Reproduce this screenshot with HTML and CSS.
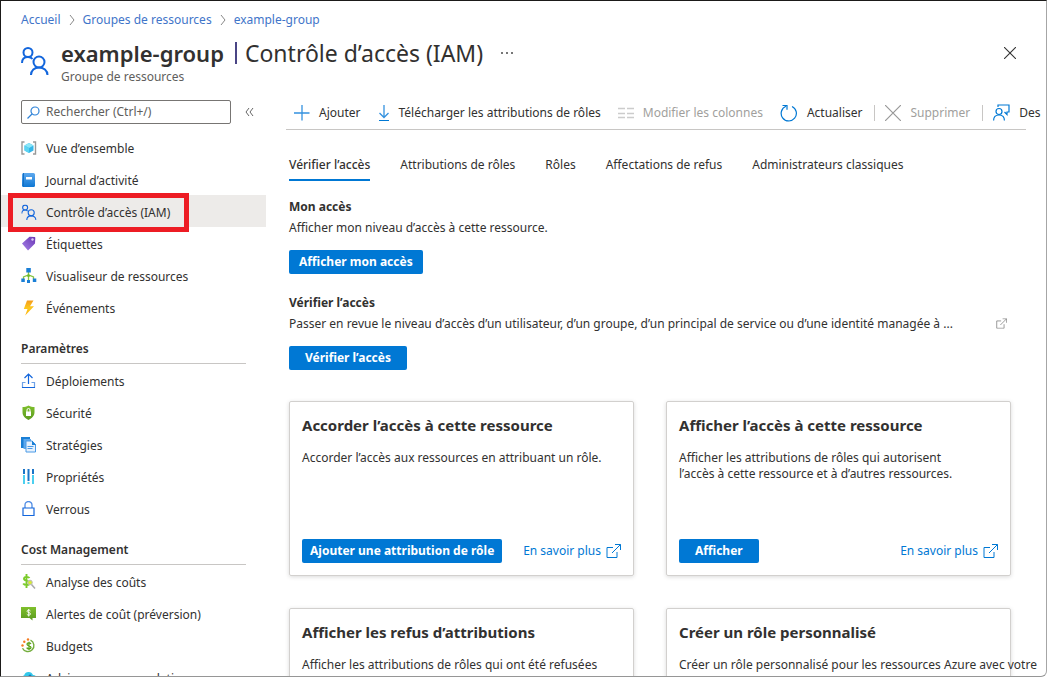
FILE: index.html
```
<!DOCTYPE html>
<html lang="fr">
<head>
<meta charset="utf-8">
<title>example-group | Contrôle d’accès (IAM)</title>
<link rel="stylesheet" href="styles.css">
</head>
<body>
<svg class="defs" aria-hidden="true">
  <defs>
    <linearGradient id="blue" x1="0" y1="0" x2="0" y2="1"><stop offset="0" stop-color="#5ea9ee"/><stop offset="1" stop-color="#0f78d4"/></linearGradient>
    <linearGradient id="purple" x1="1" y1="0" x2="0" y2="1"><stop offset="0" stop-color="#6a35b4"/><stop offset="1" stop-color="#a583e8"/></linearGradient>
    <linearGradient id="green" x1="0" y1="0" x2="0" y2="1"><stop offset="0" stop-color="#7fc02c"/><stop offset="1" stop-color="#5b9a20"/></linearGradient>
    <linearGradient id="bolt" x1="0" y1="0" x2="0" y2="1"><stop offset="0" stop-color="#f59b1c"/><stop offset=".5" stop-color="#fcc81c"/><stop offset="1" stop-color="#fdb515"/></linearGradient>
    <symbol id="people" viewBox="0 0 28 28">
      <g fill="none" stroke="#1366dc" stroke-width="2">
        <circle cx="7" cy="5.500" r="4.500"/><path d="M1 16c0-4 2.500-6 6-6 2 0 3.500.7 4.500 2"/>
        <circle cx="18" cy="15" r="5.500"/><path d="M10 28c0-4.500 3.500-7.500 8-7.500s8.500 3 8.500 7.500"/>
      </g>
    </symbol>
    <symbol id="external" viewBox="0 0 15 14">
      <path d="M7 3.500H1v10h10V8M9 .5h5.500V6M14.500.5 6 9" fill="none" stroke="currentColor"/>
    </symbol>
  </defs>
</svg>
<div class="portal">
  <header class="header">
    <nav class="breadcrumb" aria-label="Fil d’Ariane">
      <a href="#">Accueil</a>
      <svg width="6" height="10" viewBox="0 0 6 10"><path d="M1 0l4 5-4 5" fill="none" stroke="#888"/></svg>
      <a href="#">Groupes de ressources</a>
      <svg width="6" height="10" viewBox="0 0 6 10"><path d="M1 0l4 5-4 5" fill="none" stroke="#888"/></svg>
      <a href="#">example-group</a>
    </nav>
    <div class="heading">
      <svg class="heading-icon" width="28" height="28"><use href="#people"/></svg>
      <div class="heading-text">
        <div class="title-row">
          <h1><strong>example-group</strong><i class="bar"></i><span>Contrôle d’accès (IAM)</span></h1>
          <button class="plain" aria-label="Plus"><svg width="12" height="2" viewBox="0 0 12 2" fill="#777"><path d="M0 0h2v2H0zM5 0h2v2H5zM10 0h2v2h-2z"/></svg></button>
        </div>
        <p>Groupe de ressources</p>
      </div>
      <button class="plain close" aria-label="Fermer"><svg width="12" height="12" viewBox="0 0 12 12"><path d="M0 0l12 12M12 0L0 12" stroke="#333" stroke-width="1.100"/></svg></button>
    </div>
  </header>
  <div class="columns">
    <aside class="sidebar">
      <div class="search-row">
        <label class="search">
          <svg width="13" height="13" viewBox="0 0 13 13"><path d="M.5 12.500 5 8" stroke="#2f83d8" stroke-width="1.300"/><circle cx="8" cy="5" r="4" fill="none" stroke="#2f83d8" stroke-width="1.200"/></svg>
          <input type="text" aria-label="Rechercher" placeholder="Rechercher (Ctrl+/)">
        </label>
        <button class="plain" aria-label="Réduire le menu"><svg width="9" height="8" viewBox="0 0 9 8"><path d="M4 0 1 4l3 4M8 0 5 4l3 4" fill="none" stroke="#666"/></svg></button>
      </div>
      <ul class="menu">
        <li><a href="#"><svg width="16" height="16" viewBox="0 0 16 16"><path d="M3.500 2H1v12h2.500M12 2h2.500v12H12" fill="none" stroke="#999" stroke-width="1.400"/><path d="M8 3l4.500 2.500v5L8 13l-4.500-2.500v-5z" fill="#35b6e8"/><path d="M8 3l4.500 2.500L8 8 3.500 5.500z" fill="#8be6f8"/><path d="M3.500 5.500 8 8v5l-4.500-2.500z" fill="#5cd4f2"/></svg>Vue d’ensemble</a></li>
        <li><a href="#"><svg width="16" height="16" viewBox="0 0 16 16"><rect x="1" y="1" width="13" height="14" rx="1.500" fill="url(#blue)"/><path d="M2.500 1v14" stroke="#1570c4"/><rect x="5" y="5" width="6" height="2.500" fill="#fff"/></svg>Journal d’activité</a></li>
        <li class="selected"><a href="#" aria-current="page"><svg width="16" height="16" viewBox="0 -1 28 29"><use href="#people" width="28" height="28"/></svg>Contrôle d’accès (IAM)</a></li>
        <li><a href="#"><svg width="16" height="16" viewBox="0 0 16 16"><path d="M1 7.500 8.500.8l5 .2c.6 0 .8.300.8.900l-.3 5.600L7 14.500z" fill="url(#purple)"/><circle cx="11.500" cy="3.500" r="1.200" fill="#dccbf7"/></svg>Étiquettes</a></li>
        <li><a href="#"><svg width="16" height="16" viewBox="0 0 16 16"><path d="M7.500 4v8M2.500 11V9l5-2 5 2v2" fill="none" stroke="#86c440" stroke-width="1.300"/><path d="M5.300 0h4.500v4.500H5.300zM.3 10.500h3.500V14H.3zM11.800 10.500h3.500V14h-3.500z" fill="#1a7fd6"/><circle cx="7.500" cy="7.500" r="1.500" fill="#6fba2c"/><path d="M6 12h3v3H6z" fill="#1a7fd6"/></svg>Visualiseur de ressources</a></li>
        <li><a href="#"><svg width="16" height="16" viewBox="0 0 16 16"><path d="M6 .5h6.500L9 6.300h4L4.200 15.500 6.500 9H2.800z" fill="url(#bolt)"/></svg>Événements</a></li>
      </ul>
      <h2>Paramètres</h2>
      <ul class="menu">
        <li><a href="#"><svg width="16" height="16" viewBox="0 0 16 16" fill="none"><path d="M7.500 11V1M3.500 5l4-4 4 4" stroke="#1366dc" stroke-width="1.200"/><path d="M4.500 9.500h-3v5h12v-5h-3" stroke="#6fa3e8" stroke-width="1.200"/><path d="M1 14.500h13" stroke="#1366dc"/></svg>Déploiements</a></li>
        <li><a href="#"><svg width="16" height="16" viewBox="0 0 16 16"><path d="M7.500.5c2 1.300 4 1.500 6 1.500v5c0 4-2.500 6.300-6 8-3.500-1.700-6-4-6-8V2c2 0 4-.2 6-1.500z" fill="url(#green)"/><path d="M5 6.500h5V11H5z" fill="#fff"/><path d="M6 7V5a1.500 1.500 0 0 1 3 0v2" fill="none" stroke="#fff"/></svg>Sécurité</a></li>
        <li><a href="#"><svg width="16" height="16" viewBox="0 0 16 16"><path d="M0 0h9v3H3v8H0z" fill="#1a7fd6"/><path d="M2.500 2H10v3H5v7H2.500z" fill="#5ea9ee"/><path d="M5 4h6l3.500 3.500V15H5z" fill="#e6f1fd" stroke="#4a9ae6"/><path d="M11 3.500 15 8h-4z" fill="#1a7fd6"/><path d="M6.500 9.500h6M6.500 11.500h5" stroke="#4a9ae6"/></svg>Stratégies</a></li>
        <li><a href="#"><svg width="16" height="16" viewBox="0 0 16 16"><path d="M2 0h2v5H2zM6.500 0h2v12h-2zM11 0h2v5h-2z" fill="#1a74c8"/><path d="M2 6h2v9H2zM6.500 13h2v2h-2zM11 6h2v9h-2z" fill="#4cd0f0"/></svg>Propriétés</a></li>
        <li><a href="#"><svg width="16" height="16" viewBox="0 0 16 16"><path d="M4 7V4a3.500 3.500 0 0 1 7 0v3" fill="none" stroke="#4f8ce4" stroke-width="1.300"/><path d="M2 7h11v7.500H2z" fill="none" stroke="#1366dc" stroke-width="1.200"/></svg>Verrous</a></li>
      </ul>
      <h2>Cost Management</h2>
      <ul class="menu">
        <li><a href="#"><svg width="16" height="16" viewBox="0 0 16 16" fill="none"><path d="M8.500 4C7.500 2.500 3 2.200 3 4.700 3 7.500 8.500 6.200 8.500 9c0 2.800-5 2.500-6.300.5M5.500 0v14" stroke="#7bcb2a" stroke-width="1.900"/><circle cx="9" cy="8.500" r="2.300" fill="#d5ea38" stroke="#bbb"/><path d="m10.500 10.500 3.500 4" stroke="#aaa" stroke-width="1.500"/></svg>Analyse des coûts</a></li>
        <li><a href="#"><svg width="16" height="16" viewBox="0 0 16 16"><path d="M0 1h15v11h-3.500v2.500L8.500 12H0z" fill="url(#green)"/><path d="M9.500 5C9 3.800 6 3.800 6 5.200 6 7 9.500 6 9.500 8c0 1.500-3 1.500-3.700.2M7.700 3v7.500" fill="none" stroke="#fff" stroke-width=".9"/></svg>Alertes de coût (préversion)</a></li>
        <li><a href="#"><svg width="16" height="16" viewBox="0 0 16 16" fill="none"><path d="M9.500 2.200a6 6 0 1 1-8 8" stroke="#73ad3c" stroke-width="1.400"/><g fill="#f47b20"><circle cx="1.500" cy="7.500" r="1.200"/><circle cx="3.300" cy="3.800" r="1.200"/><circle cx="7" cy="1.500" r="1.200"/></g><path d="M10 6C9 4.500 6 4.500 6 6.200c0 2 4 1.200 4 3.200 0 1.800-3.500 1.800-4.300.2M8 3.800v8.400" stroke="#5ba51c" stroke-width="1.300"/></svg>Budgets</a></li>
        <li><a href="#"><svg width="16" height="16" viewBox="0 0 16 16"><path d="M4 12a3.500 3.500 0 0 1-.8-6.700A4.700 4.700 0 0 1 12 5a3.500 3.500 0 0 1 0 7z" fill="#32c8ea"/><circle cx="9" cy="6" r="1.500" fill="#1876b8"/></svg>Advisor recommendations</a></li>
      </ul>
    </aside>
    <main class="main">
      <div class="toolbar">
        <button><svg width="16" height="16" viewBox="0 0 16 16"><path d="M8 0v15.500M0 8h15.500" stroke="#3391df" stroke-width="1.300"/></svg>Ajouter</button>
        <button><svg width="12" height="16" viewBox="0 0 12 16"><path d="M6 0v12M1.500 8 6 12.500 10.500 8" fill="none" stroke="#3391df" stroke-width="1.300"/><path d="M1 15.500h10" stroke="#0078d4"/></svg>Télécharger les attributions de rôles</button>
        <button disabled><svg width="16" height="16" viewBox="0 0 16 16"><path d="M0 3.500h7M9 3.500h7M0 8.500h7M9 8.500h7M0 12.500h7M9 12.500h7" stroke="#ccc" stroke-width="1.600"/></svg>Modifier les colonnes</button>
        <button><svg width="18" height="18" viewBox="0 0 18 18" fill="none" stroke="#0078d4" stroke-width="1.200"><path d="M12 2.500a7.600 7.600 0 1 1-6-.2M2.500 1.500H7v4.300"/></svg>Actualiser</button>
        <span class="divider"></span>
        <button disabled><svg width="16" height="16" viewBox="0 0 16 16"><path d="M0 0l16 16M16 0L0 16" stroke="#999" stroke-width="1.200"/></svg>Supprimer</button>
        <span class="divider"></span>
        <button><svg width="17" height="17" viewBox="0 0 17 17" fill="none" stroke="#0078d4" stroke-width="1.200"><path d="M5 3V1h11v7h-2v2.500L11.500 8"/><circle cx="6" cy="7.500" r="3"/><path d="M.6 16.500c0-3.500 2.200-5.500 5.400-5.500s5.400 2 5.400 5.500"/></svg>Des</button>
      </div>
      <div class="content">
        <nav class="tabs">
          <a href="#" aria-current="page">Vérifier l’accès</a>
          <a href="#">Attributions de rôles</a>
          <a href="#">Rôles</a>
          <a href="#">Affectations de refus</a>
          <a href="#">Administrateurs classiques</a>
        </nav>
        <section class="block">
          <h3>Mon accès</h3>
          <p>Afficher mon niveau d’accès à cette ressource.</p>
          <button class="primary">Afficher mon accès</button>
        </section>
        <section class="block">
          <h3>Vérifier l’accès</h3>
          <p class="more">Passer en revue le niveau d’accès d’un utilisateur, d’un groupe, d’un principal de service ou d’une identité managée à ...
            <a href="#" aria-label="En savoir plus"><svg width="11" height="11" viewBox="0 0 15 14"><use href="#external" width="15" height="14"/></svg></a></p>
          <button class="primary wide">Vérifier l’accès</button>
        </section>
        <div class="cards">
          <article class="card">
            <h3>Accorder l’accès à cette ressource</h3>
            <p>Accorder l’accès aux ressources en attribuant un rôle.</p>
            <footer><button class="primary snug">Ajouter une attribution de rôle</button><a href="#">En savoir plus<svg width="15" height="14"><use href="#external"/></svg></a></footer>
          </article>
          <article class="card">
            <h3>Afficher l’accès à cette ressource</h3>
            <p>Afficher les attributions de rôles qui autorisent<br>l’accès à cette ressource et à d’autres ressources.</p>
            <footer><button class="primary wide">Afficher</button><a href="#">En savoir plus<svg width="15" height="14"><use href="#external"/></svg></a></footer>
          </article>
          <article class="card">
            <h3>Afficher les refus d’attributions</h3>
            <p>Afficher les attributions de rôles qui ont été refusées</p>
          </article>
          <article class="card">
            <h3>Créer un rôle personnalisé</h3>
            <p class="nowrap">Créer un rôle personnalisé pour les ressources Azure avec votre</p>
          </article>
        </div>
      </div>
    </main>
  </div>
</div>
</body>
</html>
```
FILE: styles.css
```
*, *::after { box-sizing: border-box; }
body, h1, h2, h3, p, ul { margin: 0; padding: 0; }
body {
  font: 12px/16px "Noto Sans", "Open Sans", sans-serif;
  color: #323130;
  background: #fff;
}
a { color: inherit; text-decoration: none; }
button, input { font: inherit; color: inherit; }
svg { flex: none; display: block; }
.defs { position: absolute; width: 0; height: 0; }

.portal {
  display: flex;
  flex-direction: column;
  height: 100vh;
  overflow: hidden;
  border: 1px solid #1b1a19;
  border-right-color: #a6a6a6;
  border-bottom-color: #969696;
  border-bottom-right-radius: 6px;
}
.plain {
  display: flex;
  padding: 4px;
  border: 0;
  background: none;
}

.header { padding: 11px 26px 0 20px; }
.breadcrumb { display: flex; align-items: center; gap: 8px; color: #3f75c9; }
.heading { display: flex; align-items: flex-start; margin-top: 9px; }
.heading-icon { margin: 10px 12px 0 0; }
.heading-text { flex: 1; color: #605e5c; }
.title-row { display: flex; align-items: center; gap: 14px; }
h1 {
  display: flex;
  align-items: center;
  font-size: 23px;
  font-weight: 400;
  line-height: 32px;
  color: #323130;
}
h1 strong { font-size: 22px; font-weight: 600; }
.bar { width: 2px; height: 22px; margin: 0 8px 0 11px; background: #4a4585; }
.close { margin-top: 6px; }

.columns { display: flex; flex: 1; min-height: 0; }
.sidebar { flex: none; width: 265px; padding-top: 15px; }
.search-row { display: flex; align-items: center; gap: 10px; padding-left: 20px; margin-bottom: 7px; }
.search {
  display: flex;
  align-items: center;
  gap: 6px;
  width: 210px;
  height: 24px;
  padding: 0 5px;
  border: 1px solid #777573;
  border-radius: 2px;
}
.search input { flex: 1; min-width: 0; padding: 0; border: 0; outline: 0; background: none; }
.search input::placeholder { color: #605e5c; opacity: 1; }
.menu { list-style: none; }
.menu a { display: flex; align-items: center; gap: 9px; height: 32px; padding: 4px 0 0 20px; }
.menu svg { margin-bottom: 2px; }
.selected { position: relative; background: #edebe9; }
.selected::after {
  content: "";
  position: absolute;
  inset: -2px auto -5px 7px;
  width: 181px;
  border: 5px solid #ed1c24;
}
h2 {
  height: 32px;
  margin: 9px 20px 0;
  border-bottom: 1px solid #c8c6c4;
  font-size: 12px;
  font-weight: 600;
  line-height: 33px;
}

.main { flex: 1; min-width: 0; padding: 10px 20px 0; }
.toolbar { display: flex; align-items: center; height: 35px; padding: 1px 0 0 8px; border-bottom: 1px solid #c8c6c4; }
.toolbar button {
  display: flex;
  align-items: center;
  gap: 9px;
  flex: none;
  margin-right: 17px;
  padding: 0;
  border: 0;
  background: none;
  white-space: nowrap;
}
.toolbar button:disabled { color: #a19f9d; }
.divider { flex: none; width: 1px; height: 16px; margin: 0 10px 0 -5px; background: #c8c6c4; }

.content { padding: 18px 15px 0 3px; }
.tabs { display: flex; gap: 30px; }
.tabs a { height: 33px; line-height: 34px; }
.tabs [aria-current] { border-bottom: 2px solid #0078d4; font-weight: 500; }
.block { margin-top: 15px; line-height: 21px; }
.block + .block { margin-top: 18px; }
.block h3 { font-size: 12px; font-weight: 700; }
.more { display: flex; align-items: center; justify-content: space-between; gap: 10px; padding-right: 4px; white-space: nowrap; }
.more a { color: #777; }
.primary {
  display: block;
  height: 24px;
  padding: 0 10px;
  border: 0;
  border-radius: 2px;
  background: #0078d4;
  color: #fff;
  font-weight: 700;
  line-height: 24px;
}
.block .primary { margin-top: 12px; }
.primary.wide { padding: 0 16px; }
.primary.snug { padding: 0 8px; }

.cards { display: grid; grid-template-columns: 1fr 1fr; gap: 32px; margin-top: 31px; }
.card {
  display: flex;
  flex-direction: column;
  min-width: 0;
  min-height: 175px;
  padding: 11px 12px 12px;
  border: 1px solid #d2d0ce;
  border-radius: 2px;
  box-shadow: 0 1px 4px #00000026;
}
.card h3 { font-size: 15px; font-weight: 700; line-height: 24px; }
.card p { margin-top: 13px; }
.nowrap { white-space: nowrap; }
.card footer { display: flex; align-items: center; justify-content: space-between; margin-top: auto; }
.card footer a { display: flex; align-items: center; gap: 5px; color: #0078d4; }
```
